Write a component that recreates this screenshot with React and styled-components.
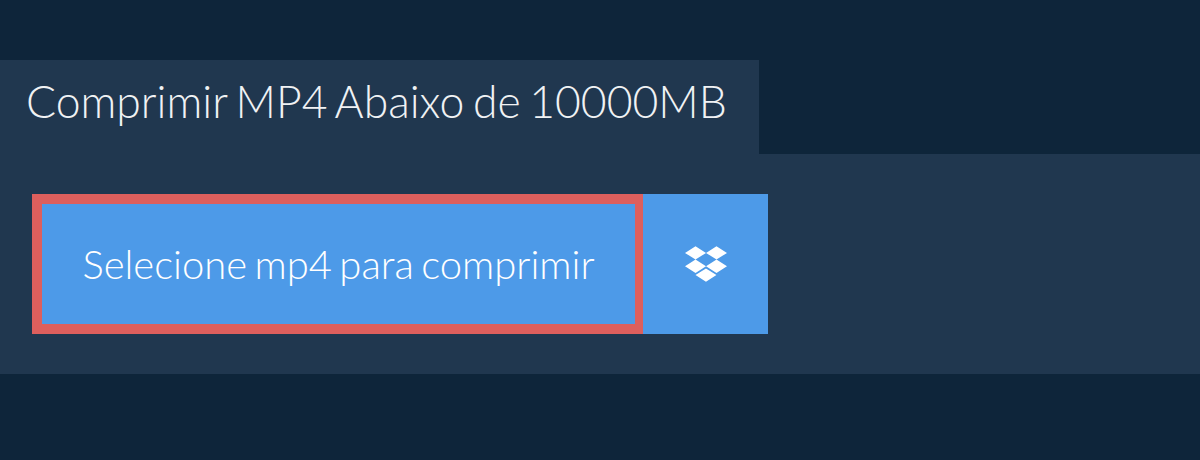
import React from 'react';
import styled, { createGlobalStyle } from 'styled-components';
import { FaDropbox } from 'react-icons/fa';

const GlobalStyle = createGlobalStyle`
  html, body {
    margin: 0;
    padding: 0;
    background: #0e253a;
    font-family: Lato, "Open Sans", sans-serif;
  }
`;

const Page = styled.div`
  box-sizing: border-box;
  width: 1200px;
  height: 460px;
  padding-top: 60px;
  background: #0e253a;
  overflow: hidden;
`;

const TitleTab = styled.h1`
  box-sizing: border-box;
  width: 759px;
  height: 94px;
  margin: 0;
  padding: 16px 0 0 26px;
  background: #20374f;
  color: #f0f2f4;
  font-size: 44.5px;
  font-weight: 300;
  line-height: 50px;
  word-spacing: -3.5px;
  white-space: nowrap;
`;

const Panel = styled.div`
  box-sizing: border-box;
  display: flex;
  height: 220px;
  padding: 40px 32px;
  background: #20374f;
`;

const SelectButton = styled.button`
  box-sizing: border-box;
  width: 611px;
  height: 140px;
  padding: 0;
  border: solid #dd5f5d;
  border-width: 10px 8px 10px 10px;
  background: #4d9ae8;
  color: #fff;
  font-family: inherit;
  font-size: 40px;
  font-weight: 300;
  word-spacing: -3.5px;
  white-space: nowrap;
  cursor: pointer;
`;

const DropboxButton = styled.button`
  display: flex;
  align-items: center;
  justify-content: center;
  width: 125px;
  height: 140px;
  padding: 0;
  border: none;
  background: #4d9ae8;
  color: #fff;
  font-size: 42px;
  cursor: pointer;
`;

export default function App() {
  return (
    <Page>
      <GlobalStyle />
      <TitleTab>Comprimir MP4 Abaixo de 10000MB</TitleTab>
      <Panel>
        <SelectButton>Selecione mp4 para comprimir</SelectButton>
        <DropboxButton aria-label="Dropbox">
          <FaDropbox />
        </DropboxButton>
      </Panel>
    </Page>
  );
}
